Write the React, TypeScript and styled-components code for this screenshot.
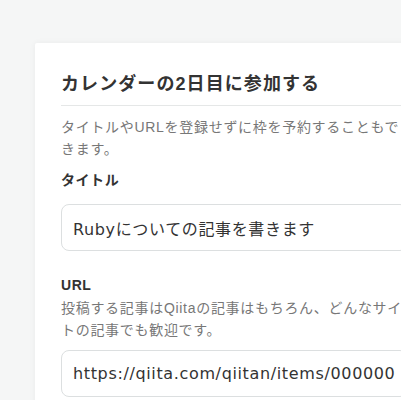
import React from 'react';
import styled, { createGlobalStyle } from 'styled-components';

const GlobalStyle = createGlobalStyle`
  html, body {
    margin: 0;
    padding: 0;
    background-color: #f5f6f6;
    font-family: 'Liberation Sans', 'Noto Sans CJK JP', sans-serif;
    color: #333;
  }
`;

type FieldProps = {
  label: string;
  note?: string;
  value: string;
};

const Field: React.FC<FieldProps> = ({ label, note, value }) => {
  return (
    <FieldWrapper>
      <Label $withNote={!!note}>{label}</Label>
      {note && <Note>{note}</Note>}
      <Input readOnly value={value} />
    </FieldWrapper>
  );
};

export default function App() {
  return (
    <Page>
      <GlobalStyle />
      <Card>
        <Heading>カレンダーの2日目に参加する</Heading>
        <Intro>タイトルやURLを登録せずに枠を予約することもできます。</Intro>
        <Field label="タイトル" value="Rubyについての記事を書きます" />
        <Field
          label="URL"
          note="投稿する記事はQiitaの記事はもちろん、どんなサイトの記事でも歓迎です。"
          value="https://qiita.com/qiitan/items/000000000000000000"
        />
      </Card>
    </Page>
  );
}

const Page = styled.div`
  height: 400px;
  overflow: hidden;
  padding: 43px 0 0 35px;
  box-sizing: border-box;
`;

const Card = styled.div`
  width: 399px;
  box-sizing: border-box;
  padding: 28px 26px 30px;
  background-color: #fff;
  border-radius: 2px;
  box-shadow: 0 0 6px rgba(0, 0, 0, 0.05);
`;

const Heading = styled.h2`
  margin: 0;
  padding-bottom: 7px;
  border-bottom: 1px solid #e5e7e7;
  font-size: 18px;
  font-weight: 700;
  line-height: 27px;
  letter-spacing: 0.06em;
  color: #333;
`;

const Intro = styled.p`
  margin: 10px 0 9px;
  font-size: 14px;
  line-height: 22px;
  letter-spacing: 0.05em;
  color: #777;
`;

const FieldWrapper = styled.div`
  display: flex;
  flex-direction: column;
  margin-bottom: 23px;
`;

const Label = styled.label<{ $withNote: boolean }>`
  font-size: 14px;
  font-weight: 700;
  line-height: 22px;
  letter-spacing: 0.04em;
  color: #333;
  margin-bottom: ${(p) => (p.$withNote ? '1px' : '13px')};
`;

const Note = styled.p`
  margin: 0 0 9px;
  font-size: 14px;
  line-height: 22px;
  letter-spacing: 0.05em;
  color: #777;
`;

const Input = styled.input`
  box-sizing: border-box;
  width: 100%;
  height: 47px;
  padding: 0 11px;
  border: 1px solid #dcdfe0;
  border-radius: 8px;
  font-family: 'DejaVu Sans', 'Noto Sans CJK JP', sans-serif;
  font-size: 16px;
  letter-spacing: 0.04em;
  color: #333;
  outline: none;
  background: #fff;
`;
